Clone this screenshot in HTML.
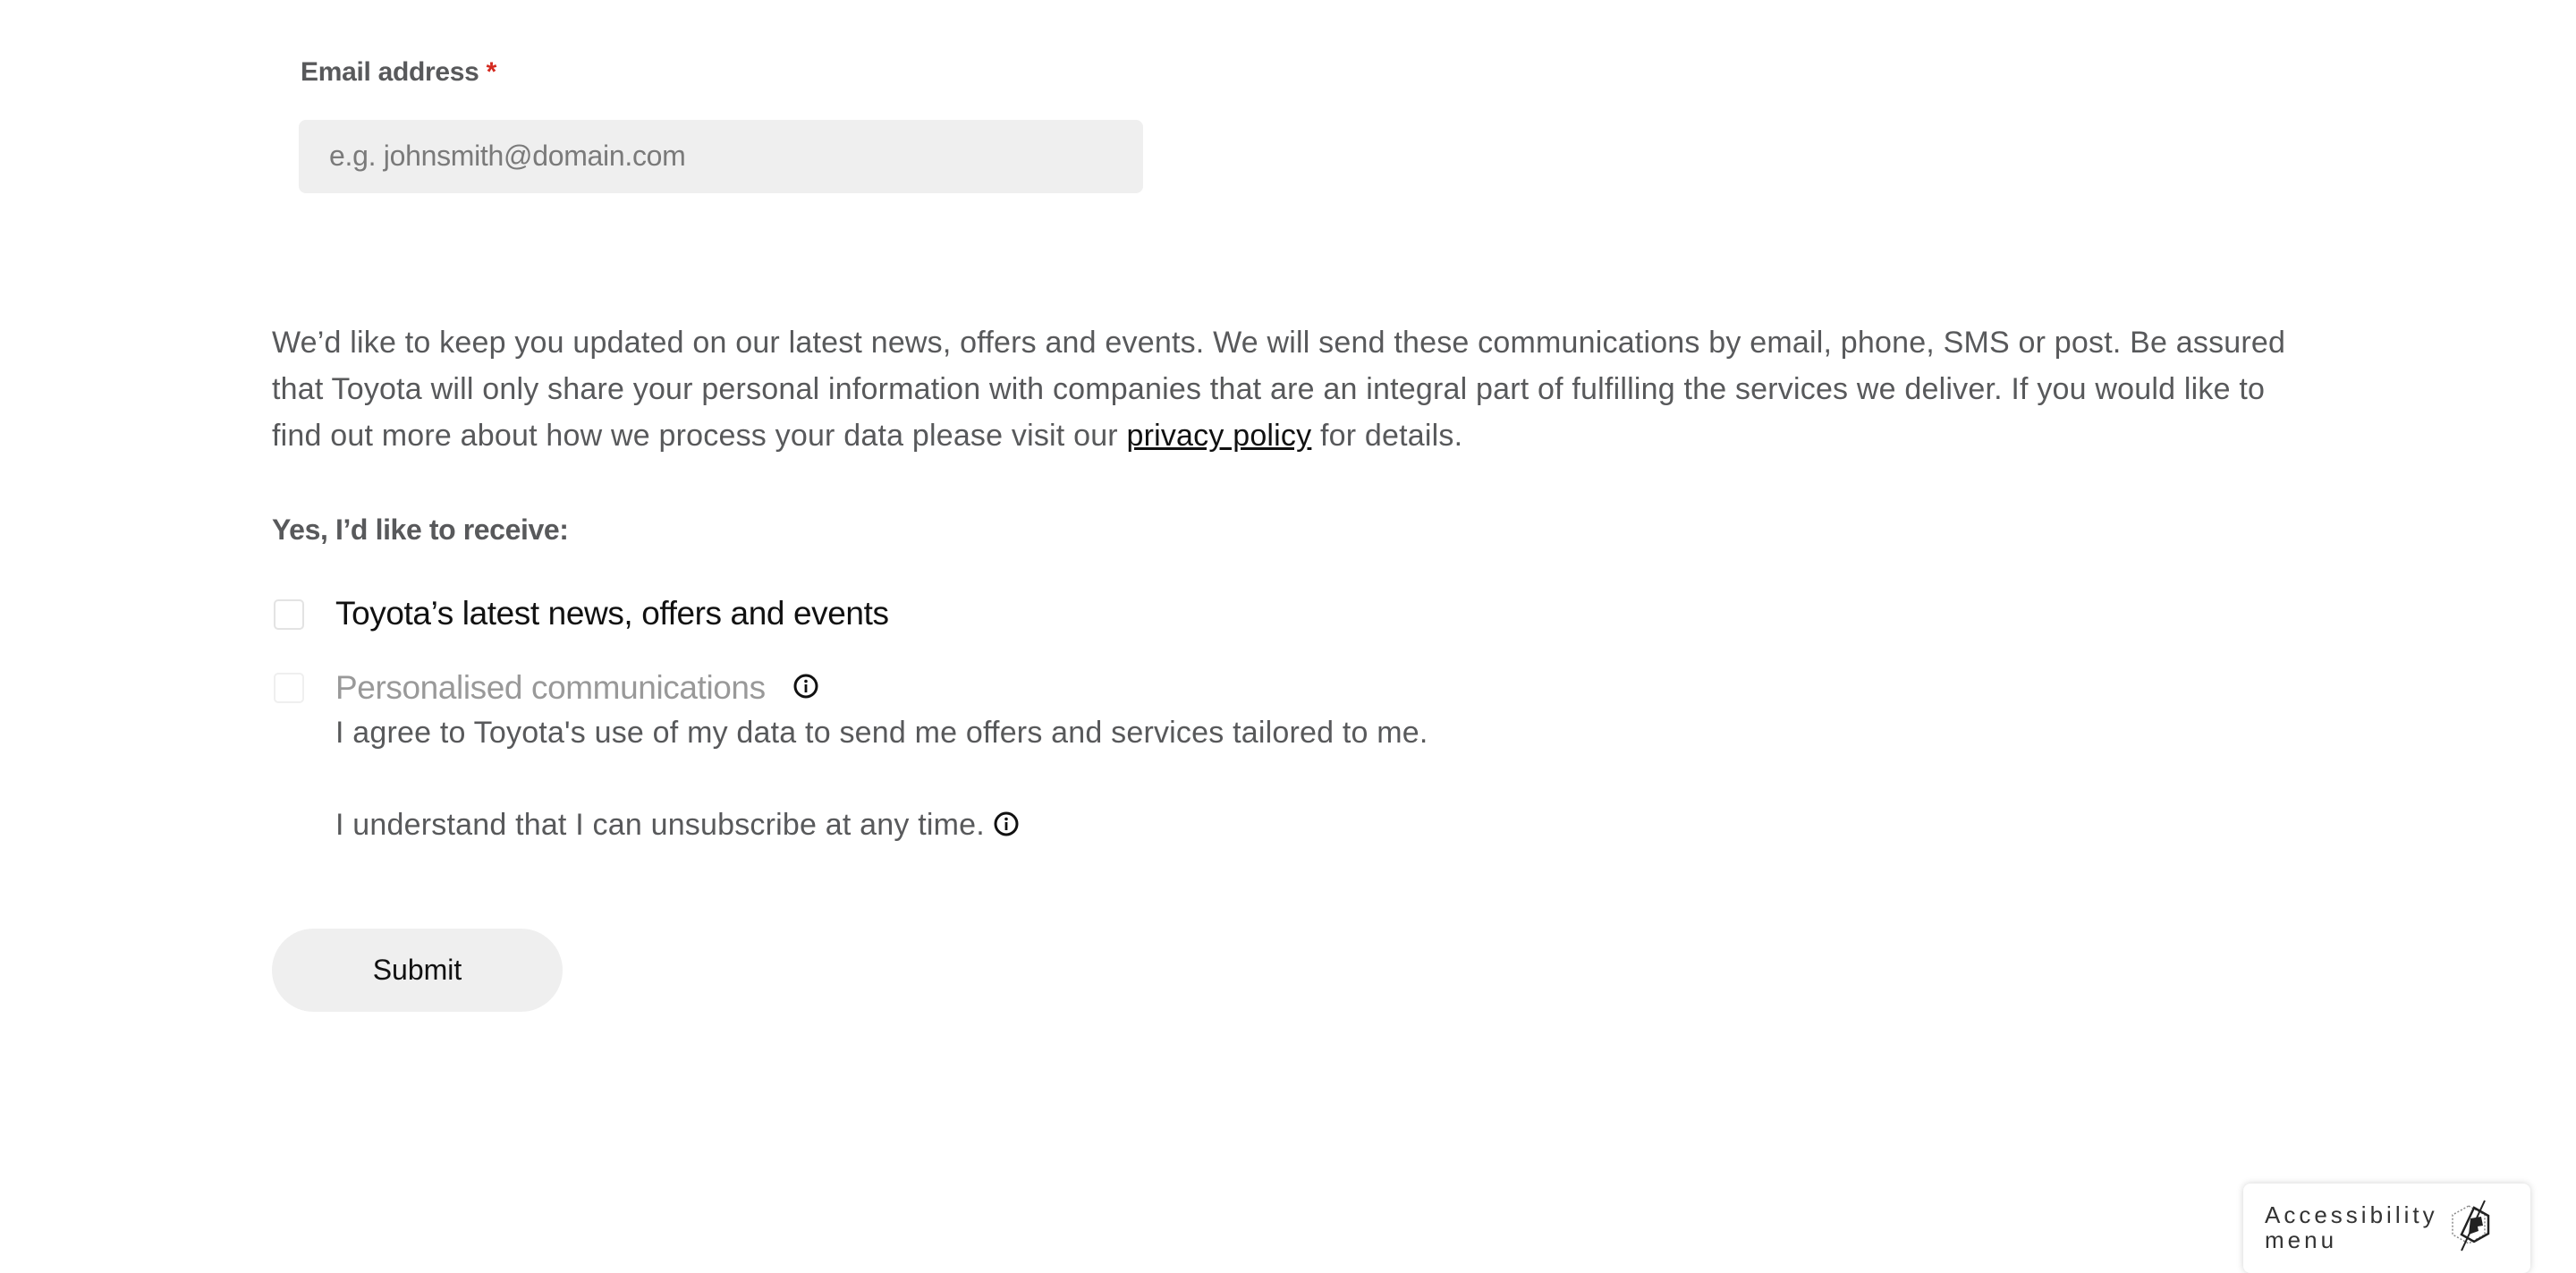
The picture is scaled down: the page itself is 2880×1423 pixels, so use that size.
<!DOCTYPE html>
<html><head><meta charset="utf-8"><style>
html,body{margin:0;padding:0;background:#fff;width:2880px;height:1404px;overflow:hidden;font-family:"Liberation Sans",sans-serif;}
.a{position:absolute;white-space:nowrap;}
.p{color:#58595b;font-size:34px;letter-spacing:0.2px;}
.cb{position:absolute;width:30px;height:30px;border:2px solid #e3e3e3;border-radius:5px;background:#fff;}
.info{width:28px;height:28px;}
</style></head><body>
<div class="a" style="left:336px;top:64px;font-size:30px;font-weight:bold;color:#58595b;letter-spacing:-0.3px">Email address <span style="color:#d42a20">*</span></div>
<div class="a" style="left:334px;top:134px;width:944px;height:82px;background:#efefef;border-radius:8px"></div>
<div class="a" style="left:368px;top:156px;font-size:32px;color:#7a7a7a;letter-spacing:-0.3px">e.g. johnsmith@domain.com</div>

<div class="a p" style="left:304px;top:364px">We’d like to keep you updated on our latest news, offers and events. We will send these communications by email, phone, SMS or post. Be assured</div>
<div class="a p" style="left:304px;top:416px">that Toyota will only share your personal information with companies that are an integral part of fulfilling the services we deliver. If you would like to</div>
<div class="a p" style="left:304px;top:468px">find out more about how we process your data please visit our <span style="color:#111;text-decoration:underline">privacy policy</span> for details.</div>

<div class="a" style="left:304px;top:574px;font-size:32px;font-weight:bold;color:#58595b;letter-spacing:-0.4px">Yes, I’d like to receive:</div>

<div class="cb" style="left:306px;top:670px"></div>
<div class="a" style="left:375px;top:665px;font-size:37px;color:#111;letter-spacing:-0.4px">Toyota’s latest news, offers and events</div>

<div class="cb" style="left:306px;top:752px;border-color:#efefef"></div>
<div class="a" style="left:375px;top:748px;font-size:37px;color:#999;letter-spacing:-0.4px">Personalised communications</div>
<svg class="a info" style="left:887px;top:753px" viewBox="0 0 28 28"><circle cx="14" cy="14" r="12" fill="none" stroke="#111" stroke-width="3"/><circle cx="14" cy="8.5" r="1.8" fill="#111"/><rect x="12.6" y="12" width="2.8" height="9" fill="#111"/></svg>

<div class="a p" style="left:375px;top:800px">I agree to Toyota's use of my data to send me offers and services tailored to me.</div>
<div class="a p" style="left:375px;top:903px">I understand that I can unsubscribe at any time. <svg class="info" style="vertical-align:-2px" viewBox="0 0 28 28"><circle cx="14" cy="14" r="12" fill="none" stroke="#111" stroke-width="3"/><circle cx="14" cy="8.5" r="1.8" fill="#111"/><rect x="12.6" y="12" width="2.8" height="9" fill="#111"/></svg></div>

<div class="a" style="left:304px;top:1038px;width:325px;height:93px;border-radius:47px;background:#efefef;font-size:32px;color:#111;text-align:center;line-height:93px">Submit</div>

<div class="a" style="left:2508px;top:1323px;width:321px;height:100px;background:#fff;border-radius:8px;box-shadow:0 0 8px rgba(0,0,0,0.18)"></div>
<div class="a" style="left:2532px;top:1344px;font-size:26px;color:#333;letter-spacing:4px;line-height:28px">Accessibility<br>menu</div>
<svg class="a" style="left:2738px;top:1340px" width="50" height="60" viewBox="0 0 50 60"><polygon points="22,8 40,18 40,40 22,50 4,40 4,18" fill="none" stroke="#888" stroke-width="1.5" stroke-dasharray="2,2"/><polygon points="28,10 44,19 44,39 28,48 14,40" fill="none" stroke="#222" stroke-width="2.5"/><path d="M24 22 L36 20 L38 30 L32 31 L33 36 L22 40 Z" fill="#222"/><line x1="40" y1="2" x2="14" y2="58" stroke="#222" stroke-width="2"/></svg>
</body></html>
